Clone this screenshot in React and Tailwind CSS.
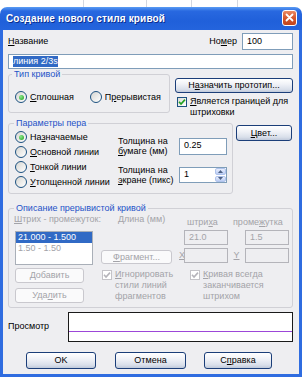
import React from 'react';

const U = ({ children }) => <span className="underline underline-offset-[1px] decoration-[0.8px]">{children}</span>;

function Radio({ checked, children, className = '' }) {
  return (
    <div className={`flex items-center h-[12px] ${className}`}>
      <span className="w-[12px] h-[12px] shrink-0 rounded-full border border-[#1C5180] bg-[linear-gradient(135deg,#D6D6D2,#FFFFFF)] flex items-center justify-center">
        {checked && <span className="w-[5px] h-[5px] rounded-full bg-[radial-gradient(circle_at_35%_35%,#8BE88B,#1E9E1E)]" />}
      </span>
      <span className="ml-[3px] leading-[11px] whitespace-nowrap">{children}</span>
    </div>
  );
}

function Check({ checked, disabled, children, className = '' }) {
  return (
    <div className={`flex items-start ${className}`}>
      <span className={`mt-[1px] w-[10px] h-[10px] shrink-0 border flex items-center justify-center ${disabled ? 'border-[#C4C3C8] bg-white' : 'border-[#1C5180] bg-[linear-gradient(135deg,#DCDCD7,#FFFFFF)]'}`}>
        {checked && (
          <svg width="8" height="8" viewBox="0 0 8 8">
            <path d="M1 3.8 L3 6 L7 1.6" fill="none" stroke={disabled ? '#B5B4BA' : '#21A121'} strokeWidth="1.6" />
          </svg>
        )}
      </span>
      <span className="ml-[3px] leading-[11px] whitespace-nowrap">{children}</span>
    </div>
  );
}

function Btn({ children, className = '', disabled }) {
  return (
    <div
      className={`flex items-center justify-center rounded-[3px] border leading-none ${
        disabled
          ? 'border-[#C9C8CE] bg-[#FAFAFB] text-[#A3A3A8]'
          : 'border-[#1B3E79] bg-[linear-gradient(to_bottom,#FFFFFF,#F0F2F7_40%,#D9DFEA_80%,#BFC9DA)] text-black'
      } ${className}`}
    >
      {children}
    </div>
  );
}

function Spinner() {
  return (
    <div className="w-[11px] flex flex-col gap-[1px]">
      <div className="flex-1 rounded-[2px] bg-[linear-gradient(#E8EEFD,#BACCF3)] border border-[#AFC3EC] flex items-center justify-center">
        <svg width="5" height="3" viewBox="0 0 5 3"><path d="M0 3 L2.5 0 L5 3Z" fill="#4D6185" /></svg>
      </div>
      <div className="flex-1 rounded-[2px] bg-[linear-gradient(#E8EEFD,#BACCF3)] border border-[#AFC3EC] flex items-center justify-center">
        <svg width="5" height="3" viewBox="0 0 5 3"><path d="M0 0 L2.5 3 L5 0Z" fill="#4D6185" /></svg>
      </div>
    </div>
  );
}

const legendCls = 'px-[2px] leading-[11px] text-[#2553C8]';
const groupCls = 'border border-[#D0D0D6] rounded-[3px]';

export default function App() {
  return (
    <div className="w-[308px] h-[382px] bg-white overflow-hidden font-['Liberation_Sans',Arial,sans-serif] text-[9px] text-black">
      <div className="h-[7px] flex">
        <div className="w-[84px] border-r border-[#D4D8E0]" />
        <div className="w-[63px] border-r border-[#D4D8E0]" />
        <div className="w-[45px] border-r border-[#D4D8E0]" />
        <div className="w-[46px] border-r border-[#D4D8E0]" />
      </div>
      <div className="w-[302px] h-[370px] flex flex-col">
        <div className="h-[23px] shrink-0 rounded-t-[7px] bg-[linear-gradient(to_bottom,#5A9CF4,#2868E0_18%,#2060DA_60%,#2464DD)] flex items-center pl-[6px] pr-[5px]">
          <span className="text-white font-bold text-[10px] tracking-[0.15px] [text-shadow:1px_1px_0_#0B2E8E] whitespace-nowrap">
            Создание нового стиля кривой
          </span>
          <div className="ml-auto mb-[2px] w-[15px] h-[16px] rounded-[3px] border border-white bg-[linear-gradient(to_bottom,#EA8A63,#D5582E_50%,#C2441C)] flex items-center justify-center">
            <svg width="9" height="9" viewBox="0 0 9 9">
              <path d="M1.5 1.5 L7.5 7.5 M7.5 1.5 L1.5 7.5" stroke="white" strokeWidth="1.8" strokeLinecap="round" />
            </svg>
          </div>
        </div>
        <div className="flex-1 border-x-[3px] border-b-[3px] border-[#2F6CE0] bg-[#EEEEF1] pt-[3px] pl-[5px] pr-[6px] flex flex-col">
          <div className="flex items-center h-[17px]">
            <span><U>Н</U>азвание</span>
            <span className="ml-auto mr-[5px]">Но<U>м</U>ер</span>
            <div className="w-[51px] h-[17px] border border-[#7F9DB9] bg-white flex items-center pl-[4px]">100</div>
          </div>
          <div className="mt-[4px] h-[15px] border border-[#7F9DB9] bg-white flex items-center pl-[4px]">
            <span className="bg-[#316AC5] text-white leading-[11px]">линия 2/3s</span>
          </div>

          <div className="flex items-start">
            <fieldset className={`w-[162px] ${groupCls}`}>
              <legend className={`ml-[3px] ${legendCls} text-[#4A5F95]`}>Тип кривой</legend>
              <div className="flex pl-[6px] pt-[11px] pb-[9px]">
                <Radio checked><U>С</U>плошная</Radio>
                <Radio className="ml-[16px]">П<U>р</U>ерывистая</Radio>
              </div>
            </fieldset>
            <div className="ml-[5px] flex-1 flex flex-col">
              <Btn className="mt-[9px] h-[15px]">Н<U>а</U>значить прототип...</Btn>
              <Check checked className="mt-[3px] ml-[2px]">
                <U>Я</U>вляется границей для<br />штриховки
              </Check>
            </div>
          </div>

          <div className="flex items-start">
            <fieldset className={`w-[225px] ${groupCls}`}>
              <legend className={`ml-[5px] ${legendCls}`}>Параметры пера</legend>
              <div className="flex pl-[6px] pt-[2px] pb-[5px]">
                <div className="w-[103px] flex flex-col gap-[3px]">
                  <Radio checked>На<U>з</U>начаемые</Radio>
                  <Radio><U>О</U>сновной линии</Radio>
                  <Radio><U>Т</U>онкой линии</Radio>
                  <Radio><U>У</U>толщенной линии</Radio>
                </div>
                <div className="flex flex-col pt-[5px] gap-[9px]">
                  <div className="flex items-center h-[20px]">
                    <div className="w-[61px] leading-[10px] whitespace-nowrap">Толщина на<br /><U>б</U>умаге (мм)</div>
                    <div className="w-[48px] h-[17px] border border-[#7F9DB9] bg-white flex items-center pl-[4px]">0.25</div>
                  </div>
                  <div className="flex items-center h-[20px]">
                    <div className="w-[61px] leading-[10px] whitespace-nowrap">Толщина на<br /><U>э</U>кране (пикс)</div>
                    <div className="w-[48px] h-[16px] border border-[#7F9DB9] bg-white flex">
                      <span className="flex-1 pl-[4px] flex items-center">1</span>
                      <Spinner />
                    </div>
                  </div>
                </div>
              </div>
            </fieldset>
            <Btn className="ml-[3px] mt-[7px] w-[56px] h-[16px]"><U>Ц</U>вет...</Btn>
          </div>

          <fieldset className={`mt-[9px] ${groupCls} text-[#A3A3A8]`}>
            <legend className={`ml-[5px] ${legendCls}`}>Описание прерывистой кривой</legend>
            <div className="flex pl-[6px] pb-[4px]">
              <div className="w-[78px] flex flex-col">
                <div className="leading-[11px] whitespace-nowrap -ml-[1px]"><U>Ш</U>трих - промежуток:</div>
                <div className="mt-[6px] h-[34px] border border-[#A9AFB8] bg-white">
                  <div className="bg-[#316AC5] text-white leading-[11px] pl-[2px]">21.000 - 1.500</div>
                  <div className="leading-[11px] pl-[2px]">1.50 - 1.50</div>
                </div>
                <Btn disabled className="mt-[3px] w-[69px] h-[15px]"><U>Д</U>обавить</Btn>
                <Btn disabled className="mt-[5px] w-[69px] h-[15px]">Уда<U>л</U>ить</Btn>
              </div>
              <div className="ml-[8px] w-[71px] flex flex-col">
                <div className="leading-[11px] pl-[17px] whitespace-nowrap">Длина (мм)</div>
                <Btn disabled className="mt-[25px] h-[14px]"><U>Ф</U>рагмент...</Btn>
                <Check checked disabled className="mt-[5px] ml-[1px]">
                  <U>И</U>гнорировать<br />стили линий<br />фрагментов
                </Check>
              </div>
              <div className="ml-[7px] w-[110px] flex flex-col">
                <div className="mt-[3px] flex leading-[11px]">
                  <span className="w-[54px] pl-[8px]">штри<U>х</U>а</span>
                  <span>проме<U>ж</U>утка</span>
                </div>
                <div className="mt-[2px] flex h-[15px]">
                  <span className="w-[5px]" />
                  <div className="w-[44px] border border-[#B4B4BA] flex items-center pl-[4px]">21.0</div>
                  <span className="w-[17px]" />
                  <div className="w-[44px] border border-[#B4B4BA] flex items-center pl-[4px]">1.5</div>
                </div>
                <div className="mt-[3px] flex h-[15px] items-center">
                  <span className="w-[5px]"><U>X</U></span>
                  <div className="w-[44px] h-[15px] border border-[#B4B4BA]" />
                  <span className="w-[17px] text-center"><U>Y</U></span>
                  <div className="w-[44px] h-[15px] border border-[#B4B4BA]" />
                </div>
                <Check checked disabled className="mt-[6px] ml-[11px]">
                  <U>К</U>ривая всегда<br />заканчивается<br />штрихом
                </Check>
              </div>
            </div>
          </fieldset>

          <div className="mt-[4px] flex items-center">
            <span className="w-[60px]">Просмотр</span>
            <div className="flex-1 h-[30px] border border-[#1A1A1A] bg-white flex flex-col">
              <div className="mt-[18px] h-[1px] bg-[#9C46D8]" />
            </div>
          </div>

          <div className="mt-[10px] flex">
            <Btn className="ml-[18px] w-[70px] h-[17px]">OK</Btn>
            <Btn className="ml-[19px] w-[71px] h-[17px]">Отмена</Btn>
            <Btn className="ml-[18px] w-[68px] h-[17px]">С<U>п</U>равка</Btn>
          </div>
        </div>
      </div>
    </div>
  );
}
